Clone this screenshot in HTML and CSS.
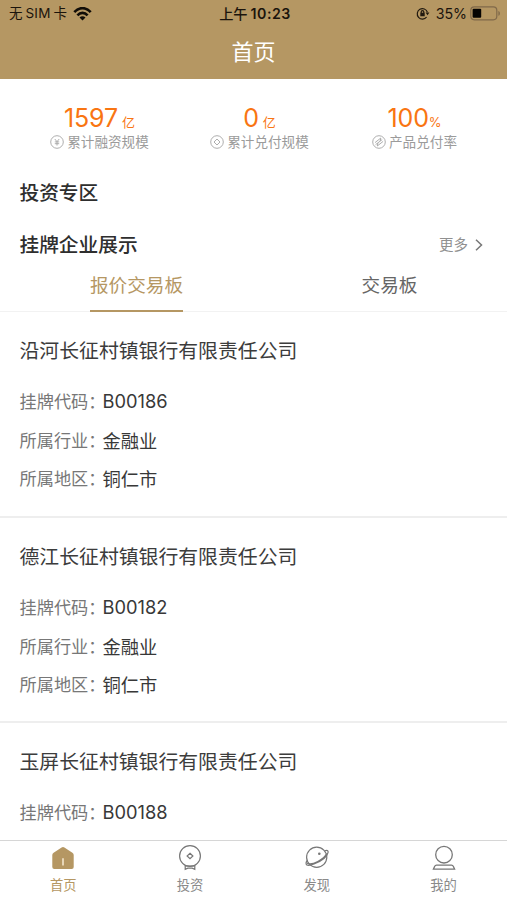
FILE: index.html
```html
<!DOCTYPE html>
<html lang="zh-CN">
<head>
<meta charset="utf-8">
<title>首页</title>
<link rel="stylesheet" href="styles.css">
</head>
<body>
<div class="app">
  <header class="header">
    <div class="status">
      <div class="status-left">
        <span class="carrier">无<span class="sim">SIM</span>卡</span>
        <svg class="wifi" width="19" height="14" viewBox="0 0 19 14"><g fill="none" stroke="#110d08" stroke-width="2.6"><path d="M1.300 5.100C6-.2 13-.2 17.700 5.100"/><path d="M4.400 8.300c3-3.300 7.200-3.300 10.200 0"/></g><path d="M9.500 13.500 6.500 10.500c1.800-1.700 4.200-1.700 6 0z" fill="#110d08"/></svg>
      </div>
      <div class="clock">上午<b>10:23</b></div>
      <div class="status-right">
        <svg width="14" height="13" viewBox="0 0 14 13"><g fill="none" stroke="#21190f" stroke-width="1.200"><path d="M10.600 10A5.200 5.200 0 1 1 11.400 5.200"/><path d="M5.200 6V5a1.300 1.300 0 0 1 2.600 0v1"/></g><path d="M9.600 5.400h3.800l-1.900 2.800zM4.300 5.800h4.400v3.400H4.300z" fill="#21190f"/></svg>
        <span class="percent">35%</span>
        <svg width="31" height="15" viewBox="0 0 31 15"><rect x=".8" y=".8" width="26" height="13" rx="3.500" fill="none" stroke="#80694a" stroke-width="1.200"/><rect x="2.600" y="2.800" width="8.600" height="9" rx="1" fill="#050403"/><path d="M28.400 5c2 .6 2 4.200 0 4.800z" fill="#80694a"/></svg>
      </div>
    </div>
    <h1>首页</h1>
  </header>

  <section class="stats">
    <div class="stat">
      <div class="figure">1597<small class="yi">亿</small></div>
      <div class="caption"><svg width="14" height="14" viewBox="0 0 14 14"><circle cx="7" cy="7" r="6.300"/><path d="m4.800 4 2.200 2.700L9.200 4M7 6.700v3.800M4.800 6.900h4.400M4.800 8.700h4.400"/></svg>累计融资规模</div>
    </div>
    <div class="stat">
      <div class="figure">0<small class="yi">亿</small></div>
      <div class="caption"><svg width="14" height="14" viewBox="0 0 14 14"><circle cx="7" cy="7" r="6.300"/><path d="m7 4 3 3-3 3-3-3z"/></svg>累计兑付规模</div>
    </div>
    <div class="stat">
      <div class="figure">100<small>%</small></div>
      <div class="caption"><svg width="14" height="14" viewBox="0 0 14 14"><circle cx="7" cy="7" r="6.300"/><path d="M3 7.600 8.800 3M3.600 9.600l6.600-5M5.300 11l5.800-4.600M5.300 11l.6-3M8.800 3l-.6 3"/></svg>产品兑付率</div>
    </div>
  </section>

  <h2 class="zone">投资专区</h2>
  <div class="section-head">
    <h2>挂牌企业展示</h2>
    <a class="more">更多<svg width="8" height="12" viewBox="0 0 8 12"><path d="m1 .8 5.500 5.200L1 11.200" fill="none" stroke="#777" stroke-width="1.500"/></svg></a>
  </div>
  <div class="tabs">
    <div class="tab active"><span>报价交易板</span></div>
    <div class="tab"><span>交易板</span></div>
  </div>

  <main class="list">
    <article class="card">
      <h3>沿河长征村镇银行有限责任公司</h3>
      <dl>
        <div><dt>挂牌代码：</dt><dd class="code">B00186</dd></div>
        <div><dt>所属行业：</dt><dd>金融业</dd></div>
        <div><dt>所属地区：</dt><dd>铜仁市</dd></div>
      </dl>
    </article>
    <article class="card">
      <h3>德江长征村镇银行有限责任公司</h3>
      <dl>
        <div><dt>挂牌代码：</dt><dd class="code">B00182</dd></div>
        <div><dt>所属行业：</dt><dd>金融业</dd></div>
        <div><dt>所属地区：</dt><dd>铜仁市</dd></div>
      </dl>
    </article>
    <article class="card">
      <h3>玉屏长征村镇银行有限责任公司</h3>
      <dl>
        <div><dt>挂牌代码：</dt><dd class="code">B00188</dd></div>
      </dl>
    </article>
  </main>

  <nav class="nav">
    <a class="active"><svg width="26" height="26" viewBox="0 0 26 26"><path d="M11.600 2.500q1.400-.9 2.800 0l8 5.200q1.300.8 1.300 2.200v12q0 2-2 2H4.300q-2 0-2-2v-12q0-1.400 1.300-2.200z" fill="#b59763"/><path d="M13 13.200v7.300" stroke="#f4e6cd" stroke-width="1.600"/></svg>首页</a>
    <a><svg width="26" height="26" viewBox="0 0 26 26"><g fill="none" stroke="#777" stroke-width="1.200"><circle cx="13" cy="11" r="10.400"/><path d="m13 8.300 2.900 2.700-2.900 2.700-2.900-2.700zM8.200 20.300v4l2.700-1.200h4.200l2.700 1.200v-4M8.200 21h9.600"/></g></svg>投资</a>
    <a><svg width="26" height="26" viewBox="0 0 26 26"><g fill="none" stroke="#777" stroke-width="1.200"><circle cx="12.700" cy="12.200" r="10.100"/><path d="M20.800 5.800c2.400-.8 3.600-.1 3.300 1.500-.9 4.300-6.500 8.700-14.100 11.700-4.500 1.700-7.500 1.700-7.900.1-.3-1.300.4-2.900 1.400-4.100M3.100 18.200c4.900 2.900 17.200-4.200 19.500-9.600"/></g><circle cx="15.300" cy="8.800" r="1.300" fill="#777"/></svg>发现</a>
    <a><svg width="26" height="26" viewBox="0 0 26 26"><g fill="none" stroke="#777" stroke-width="1.300"><circle cx="13" cy="9.700" r="8.300"/><path d="M5.500 20.200h15q1.300 0 1.900 1.300l1.200 2.700H2.400l1.200-2.700q.6-1.300 1.900-1.300z"/></g></svg>我的</a>
  </nav>
</div>
</body>
</html>
```

FILE: styles.css
```css
* { box-sizing: border-box; margin: 0; padding: 0; }
body {
  font-family: Inter, "Noto Sans CJK SC", sans-serif;
  background: #fff;
  color: #333;
}
svg { display: block; flex: none; }
.app {
  width: 507px;
  height: 900px;
  display: flex;
  flex-direction: column;
  overflow: hidden;
}
.header {
  height: 79px;
  flex: none;
  background: #b59763;
}
.status {
  height: 27px;
  padding: 0 6px 0 9px;
  display: grid;
  grid-template-columns: 1fr auto 1fr;
  align-items: center;
  color: #1b140c;
  font-size: 14px;
  line-height: 27px;
  white-space: nowrap;
}
.status-left, .status-right { display: flex; align-items: center; }
.carrier { font-size: 13.5px; }
.sim { margin: 0 3px; letter-spacing: .2px; }
.wifi { margin-left: 6px; }
.clock { font-weight: 500; font-size: 14.2px; }
.clock b { font-weight: 600; letter-spacing: .5px; margin-left: 3px; }
.status-right { justify-content: flex-end; }
.percent { margin: 0 3px 0 6px; font-size: 14.2px; }
h1 {
  color: #fff;
  font-size: 22px;
  font-weight: 400;
  line-height: 51px;
  text-align: center;
}
.stats {
  flex: none;
  height: 88px;
  padding: 24px 15px 0 22px;
  display: flex;
  justify-content: space-between;
}
.stat {
  width: 155px;
  display: flex;
  flex-direction: column;
  align-items: center;
}
.stat:nth-child(2) { margin-left: 5px; }
.figure {
  color: #f97512;
  font-size: 25px;
  line-height: 30px;
  height: 30px;
  letter-spacing: -.1px;
  white-space: nowrap;
}
.figure small { font-size: 13px; letter-spacing: 0; }
.figure .yi { margin-left: 4px; }
.caption {
  display: flex;
  align-items: center;
  gap: 3px;
  font-size: 13.6px;
  line-height: 18px;
  color: #9b9b9b;
  white-space: nowrap;
}
.caption svg { fill: none; stroke: #a5a5a5; stroke-width: .9; }
h2 {
  font-size: 19.7px;
  font-weight: 500;
  line-height: 52px;
  color: #2e2e2e;
}
.zone { padding-left: 19.5px; height: 52px; flex: none; }
.section-head {
  flex: none;
  height: 52px;
  padding: 0 24px 0 19.5px;
  display: flex;
  justify-content: space-between;
  align-items: center;
}
.more {
  display: flex;
  align-items: center;
  gap: 7px;
  color: #909090;
  font-size: 14.5px;
  line-height: 50px;
  height: 52px;
}
.tabs {
  flex: none;
  height: 41px;
  padding-left: 10px;
  display: flex;
  border-bottom: 1px solid #f2f2f2;
}
.tab {
  width: 253px;
  flex: none;
  display: flex;
  justify-content: center;
  font-size: 18.6px;
  line-height: 28px;
  color: #666;
}
.tab span { height: 41px; }
.tab.active span { color: #b59763; border-bottom: 2px solid #b59763; }
.list { flex: 1; min-height: 0; overflow: hidden; }
.card {
  height: 205.3px;
  padding: 20px 19.5px 0;
  border-bottom: 2px solid #eee;
}
.card:first-child { height: 206px; }
h3 {
  font-size: 19.85px;
  font-weight: 400;
  line-height: 38px;
  height: 51px;
  color: #3c3c3c;
  white-space: nowrap;
}
dl > div { display: flex; height: 38.5px; line-height: 38.5px; }
dt { width: 83px; font-size: 17.2px; color: #777; white-space: nowrap; }
dd { font-size: 18.3px; color: #383838; }
.code { line-height: 37.5px; }
.nav {
  flex: none;
  height: 60px;
  border-top: 1px solid #d6d6d6;
  display: grid;
  grid-template-columns: repeat(4, 1fr);
  background: #fff;
}
.nav a {
  display: flex;
  flex-direction: column;
  align-items: center;
  padding-top: 4px;
  font-size: 13.3px;
  line-height: 28px;
  color: #8a8a8a;
}
.nav .active { color: #b59763; }
```
